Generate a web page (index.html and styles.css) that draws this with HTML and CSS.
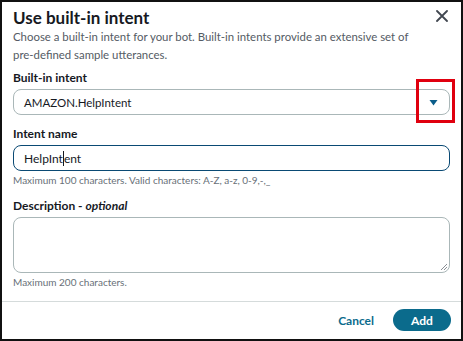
FILE: index.html
```html
<!DOCTYPE html>
<html>
<head>
<meta charset="utf-8">
<link rel="stylesheet" href="styles.css">
</head>
<body>
<div class="modal">
  <div class="body">
    <div class="header">
      <h1 class="title">Use built-in intent</h1>
      <button class="close" aria-label="Close">
        <svg width="12" height="12" viewBox="0 0 12 12"><path d="M1 1 L11 11 M11 1 L1 11" stroke="#414750" stroke-width="1.8" fill="none" stroke-linecap="round"/></svg>
      </button>
    </div>
    <p class="intro">Choose a built-in intent for your bot. Built-in intents provide an extensive set of<br>pre-defined sample utterances.</p>

    <div class="field first">
      <label class="label">Built-in intent</label>
      <div class="select">
        <span class="select-text">AMAZON.HelpIntent</span>
        <span class="arrow">
          <svg width="9" height="7" viewBox="0 0 9 7"><path d="M0.5 1 L8.5 1 L4.5 6.5 Z" fill="#0a5d8a"/></svg>
        </span>
        <span class="highlight"></span>
      </div>
    </div>

    <div class="field second">
      <label class="label">Intent name</label>
      <div class="input focused"><span>HelpInt</span><span class="caret"></span><span>ent</span></div>
      <div class="hint">Maximum 100 characters. Valid characters: A-Z, a-z, 0-9,-,_</div>
    </div>

    <div class="field third">
      <label class="label">Description - <i>optional</i></label>
      <div class="textarea">
        <svg class="grip" width="8" height="8" viewBox="0 0 8 8"><path d="M7 1 L1 7 M7 4 L4 7" stroke="#8a8f96" stroke-width="1"/></svg>
      </div>
      <div class="hint">Maximum 200 characters.</div>
    </div>
  </div>
  <div class="footer">
    <button class="cancel">Cancel</button>
    <button class="add">Add</button>
  </div>
</div>
</body>
</html>
```

FILE: styles.css
```css
* { box-sizing: border-box; }
html, body { margin: 0; padding: 0; }
body {
  font-family: "Lato", "Open Sans", sans-serif;
  color: #16191f;
  background: #fff;
}
.modal {
  width: 463px;
  height: 341px;
  border: 2px solid #111;
  background: #fff;
  display: flex;
  flex-direction: column;
}
.body {
  padding: 6px 11px 0 11px;
  flex: 1;
}
.header {
  display: flex;
  justify-content: space-between;
  align-items: flex-start;
  height: 20px;
}
.title {
  margin: 0;
  font-size: 17px;
  font-weight: 700;
  line-height: 20px;
  color: #16191f;
}
.close {
  border: none;
  background: none;
  padding: 0;
  margin: 2px 2px 0 0;
  width: 12px;
  height: 12px;
  display: flex;
}
.intro {
  margin: 0;
  font-size: 11.4px;
  line-height: 18px;
  color: #545b64;
  white-space: nowrap;
}
.field.first { margin-top: 6px; }
.field.second { margin-top: 11px; }
.field.third { margin-top: 12px; }
.label {
  display: block;
  font-size: 12px;
  font-weight: 700;
  line-height: 16px;
  margin-bottom: 3px;
}
.label i { font-weight: 700; }
.select {
  position: relative;
  height: 26px;
  border: 1px solid #aab7b8;
  border-radius: 8px;
  display: flex;
  align-items: center;
  justify-content: space-between;
  padding: 0 11px 0 10px;
  font-size: 11.5px;
}
.arrow { display: flex; }
.highlight {
  position: absolute;
  right: -6px;
  top: -11px;
  width: 39px;
  height: 44px;
  border: 3px solid #e0000f;
}
.input {
  height: 26px;
  border: 1px solid #0a4a74;
  border-radius: 8px;
  display: flex;
  align-items: center;
  padding: 0 10px;
  font-size: 12px;
}
.caret {
  display: inline-block;
  width: 1px;
  height: 15px;
  background: #16191f;
}
.hint {
  margin-top: 3px;
  font-size: 10px;
  line-height: 12px;
  color: #687078;
}
.textarea {
  position: relative;
  height: 56px;
  border: 1px solid #aab7b8;
  border-radius: 8px;
  margin-top: 0;
}
.grip { position: absolute; right: 1px; bottom: 1px; }
.footer {
  height: 38px;
  border-top: 1px solid #d5dbdb;
  display: flex;
  justify-content: flex-end;
  align-items: center;
  gap: 19px;
  padding: 0 10px 1px 0;
}
button { font-family: inherit; cursor: pointer; }
.cancel {
  border: none;
  background: none;
  padding: 0;
  font-size: 12px;
  font-weight: 700;
  color: #0b6b8c;
}
.add {
  border: none;
  background: #0b6b8c;
  color: #fff;
  font-size: 12px;
  font-weight: 700;
  height: 22px;
  width: 58px;
  border-radius: 11px;
  padding: 0;
}
```
